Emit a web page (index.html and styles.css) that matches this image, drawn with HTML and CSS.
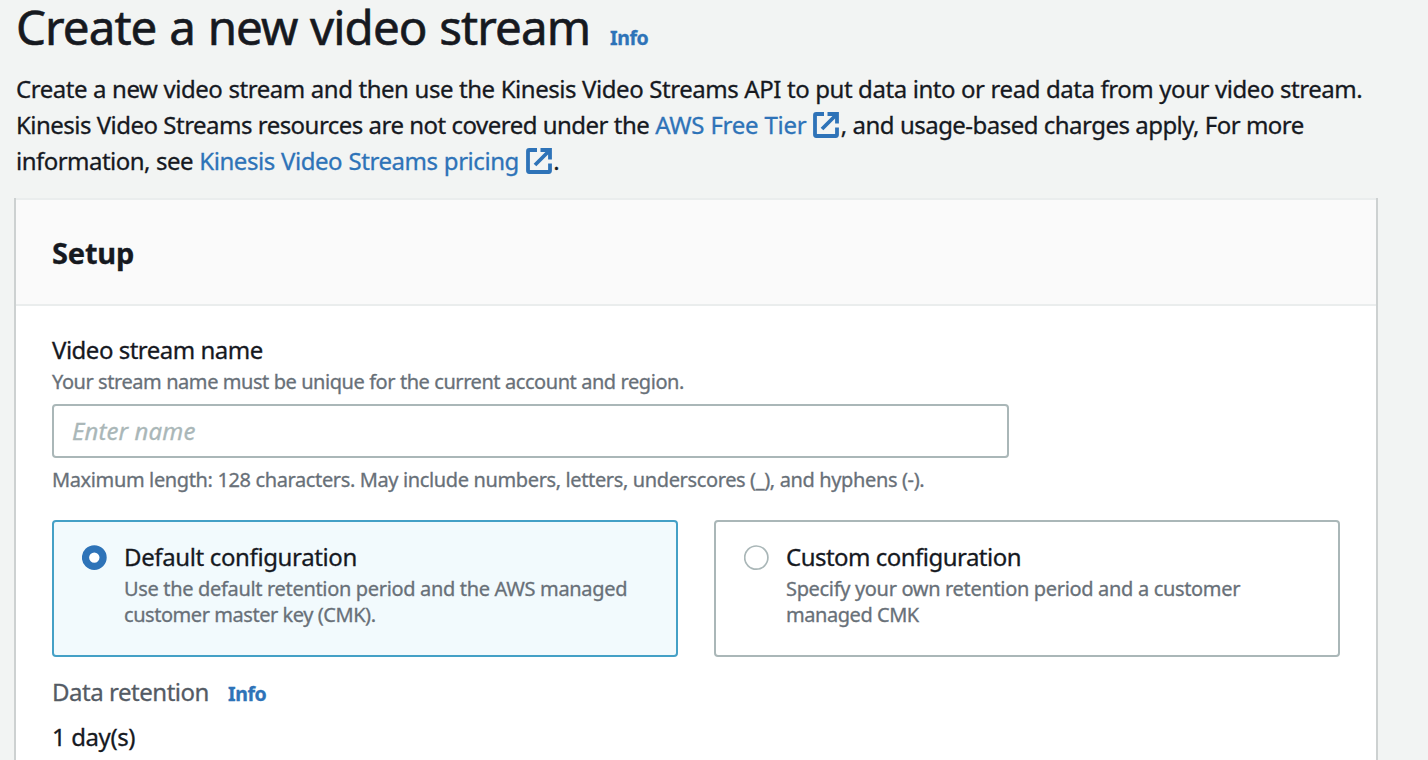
FILE: index.html
```
<!DOCTYPE html>
<html lang="en">
<head>
<meta charset="utf-8">
<title>Create a new video stream</title>
<link rel="stylesheet" href="styles.css">
</head>
<body>
<svg class="defs" aria-hidden="true">
  <symbol id="external" viewBox="0 0 27 27">
    <path d="M11 2H3.2Q2 2 2 3.2V22.8Q2 24 3.2 24H22.8Q24 24 24 22.8V15.5M14.5 2H24V11.5M23.5 2.5 9 17" fill="none" stroke="currentColor" stroke-width="3.8"/>
  </symbol>
</svg>
<header class="page-header">
  <div class="heading">
    <h1 class="title">Create a new video stream</h1>
    <a class="info">Info</a>
  </div>
  <p class="intro">
    <span class="line line-a">Create a new video stream and then use the Kinesis Video Streams API to put data into or read data from your video stream.</span>
    <span class="line line-b">Kinesis Video Streams resources are not covered under the <a class="link free-tier">AWS Free Tier <svg class="external"><use href="#external"/></svg></a>, and usage-based charges apply, For more</span>
    <span class="line line-c">information, see <a class="link pricing">Kinesis Video Streams pricing <svg class="external"><use href="#external"/></svg></a>.</span>
  </p>
</header>
<main class="panel">
  <div class="panel-header"><h2 class="panel-title">Setup</h2></div>
  <div class="panel-body">
    <label class="label" for="name">Video stream name</label>
    <div class="hint description">Your stream name must be unique for the current account and region.</div>
    <input class="field" id="name" type="text" placeholder="Enter name">
    <div class="hint constraint">Maximum length: 128 characters. May include numbers, letters, underscores (_), and hyphens (-).</div>
    <div class="tiles">
      <div class="tile selected">
        <svg class="radio" viewBox="0 0 25 26"><circle cx="12.3" cy="12.6" r="8.8" fill="#fff" stroke="#2e73b8" stroke-width="7.2"/></svg>
        <div class="tile-text">
          <div class="label tile-label-default">Default configuration</div>
          <div class="tile-desc">Use the default retention period and the AWS managed<br><span class="tight">customer master key (CMK).</span></div>
        </div>
      </div>
      <div class="tile">
        <svg class="radio" viewBox="0 0 25 26"><circle cx="12.3" cy="12.6" r="11.6" fill="#fff" stroke="#aab7b8" stroke-width="1.7"/></svg>
        <div class="tile-text">
          <div class="label tile-label-custom">Custom configuration</div>
          <div class="tile-desc">Specify your own retention period and a customer<br><span class="tight">managed CMK</span></div>
        </div>
      </div>
    </div>
    <div class="retention"><span class="retention-label">Data retention</span><a class="info">Info</a></div>
    <div class="value">1 day(s)</div>
  </div>
</main>
</body>
</html>
```
FILE: styles.css
```
* { box-sizing: border-box; }
html, body { height: 100%; }
body {
  margin: 0;
  display: flex;
  flex-direction: column;
  overflow: hidden;
  background: #f2f4f3;
  color: #16191f;
  font-family: "Noto Sans", sans-serif;
  font-size: 24px;
  white-space: nowrap;
  -webkit-text-stroke: 0.3px;
}
h1, h2, p { margin: 0; }
.defs { display: none; }
.page-header { height: 198px; flex: none; padding: 2px 0 0 16px; }
.heading { display: flex; align-items: baseline; height: 69px; }
.title { font-size: 47.5px; line-height: 50px; font-weight: 400; letter-spacing: -0.93px; word-spacing: 1.3px; width: 594px; -webkit-text-stroke: 0.6px; }
.info { color: #2e73b8; font-size: 19.5px; line-height: 26px; font-weight: 700; letter-spacing: -0.4px; }
.line { display: block; line-height: 36px; height: 36px; }
.line-a { letter-spacing: -0.45px; word-spacing: 0.2px; }
.line-b { letter-spacing: -0.53px; word-spacing: 0.15px; }
.line-c { letter-spacing: -0.53px; word-spacing: 0.5px; }
.link { color: #2e73b8; }
.free-tier { letter-spacing: -0.25px; }
.pricing { letter-spacing: -0.45px; }
.external { width: 27px; height: 27px; margin-left: 0.5px; margin-right: 0.7px; vertical-align: -5px; }
.panel {
  flex: 1;
  min-height: 0;
  width: 1364px;
  margin-left: 14px;
  border: solid #cdd1d1;
  border-width: 0 2px;
  background: #fff;
}
.panel-header { height: 108px; padding: 0 36px; background: #fafafa; border: solid #eaeded; border-width: 2px 0; }
.panel-title { font-size: 29px; line-height: 106px; font-weight: 700; letter-spacing: -0.2px; }
.panel-body { padding: 29px 36px 0; }
.label { display: block; line-height: 30px; letter-spacing: -0.5px; }
.hint { color: #687078; font-size: 20px; line-height: 30px; }
.description { padding-top: 2px; letter-spacing: -0.43px; }
.field {
  display: block;
  width: 957px;
  height: 54px;
  margin: 7px 0;
  padding: 0 18px 1px;
  border: 2px solid #aab7b8;
  border-radius: 4px;
  background: #fff;
  font: inherit;
  letter-spacing: 0.1px;
}
.field::placeholder { color: #aab7b8; font-style: italic; opacity: 1; }
.constraint { letter-spacing: -0.37px; }
.tiles { display: flex; gap: 36px; margin-top: 25px; }
.tile { width: 626px; height: 137px; padding: 20px 28px; display: flex; gap: 17px; border: 2px solid #aab7b8; border-radius: 4px; }
.selected { border-color: #44a0c6; background: #f2fafd; }
.radio { width: 25px; height: 26px; margin-top: 3px; flex: none; }
.tile-label-default { letter-spacing: -0.37px; }
.tile-label-custom { letter-spacing: -0.52px; }
.tile-desc { margin-top: 4px; color: #687078; font-size: 20px; line-height: 26px; letter-spacing: -0.33px; }
.tight { letter-spacing: -0.45px; }
.retention { display: flex; align-items: baseline; height: 32px; margin-top: 20px; line-height: 30px; }
.retention-label { width: 176px; color: #545b64; letter-spacing: -0.47px; }
.value { margin-top: 13px; line-height: 30px; letter-spacing: -0.41px; }
```
